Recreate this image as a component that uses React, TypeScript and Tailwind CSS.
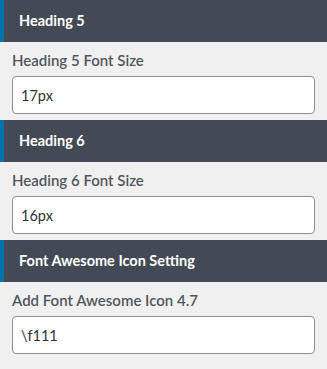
import React from 'react';

const sections = [
  { title: 'Heading 5', label: 'Heading 5 Font Size', value: '17px' },
  { title: 'Heading 6', label: 'Heading 6 Font Size', value: '16px' },
  { title: 'Font Awesome Icon Setting', label: 'Add Font Awesome Icon 4.7', value: '\\f111' },
];

const App: React.FC = () => {
  return (
    <div className="w-[327px] h-[369px] overflow-hidden bg-[#f0f0f1]" style={{ fontFamily: 'Lato, "Liberation Sans", sans-serif' }}>
      {sections.map((s) => (
        <div key={s.title}>
          <div className="h-[42px] flex items-center pl-[15px] bg-[#434a56] border-l-4 border-[#0073aa]">
            <span className="text-[14.5px] font-bold text-white">{s.title}</span>
          </div>
          <div className="px-3 pt-2 pb-[6px]">
            <div className="text-[15px] leading-5 font-semibold text-[#50575e] mb-[6px]">{s.label}</div>
            <input
              readOnly
              value={s.value}
              className="w-full h-[38px] px-2 rounded border border-[#8c8f94] bg-white text-[14.5px] text-[#2c3338] outline-none"
            />
          </div>
        </div>
      ))}
    </div>
  );
};

export default App;
